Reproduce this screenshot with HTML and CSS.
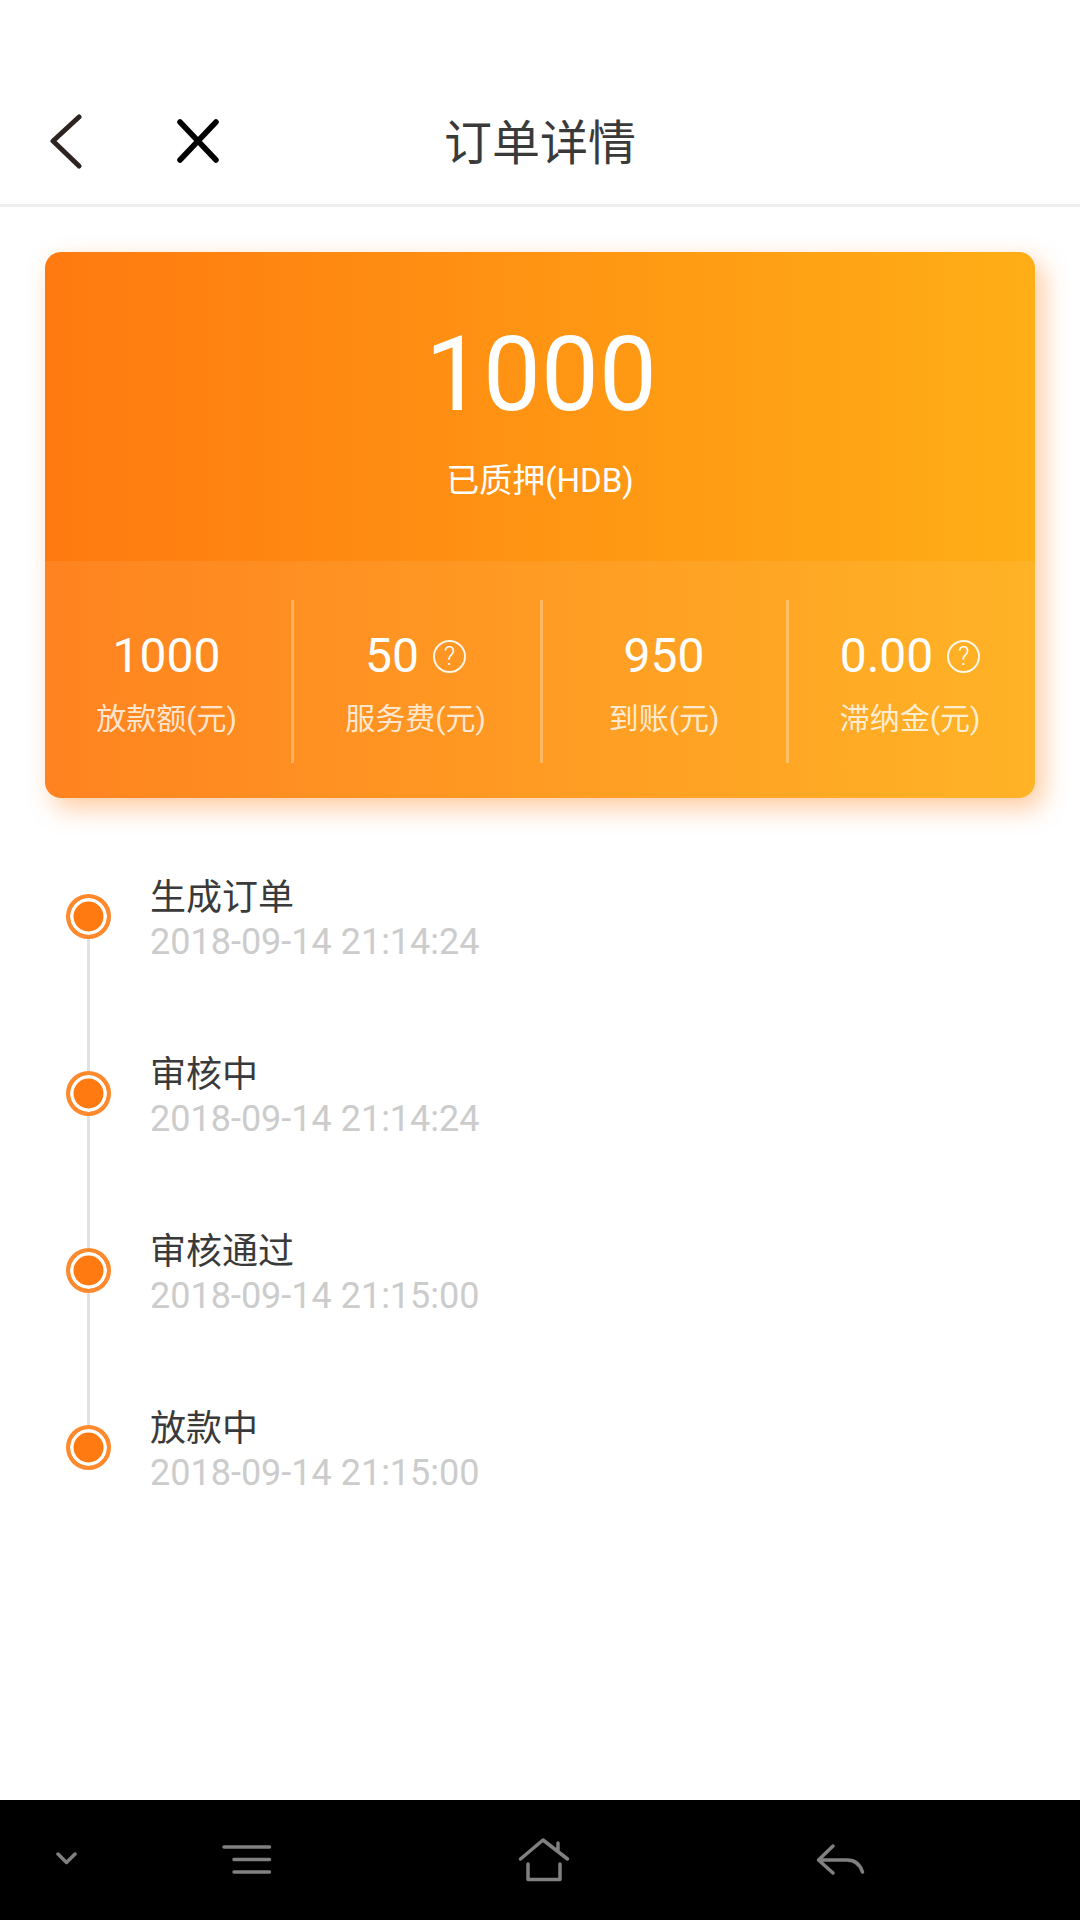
FILE: index.html
```html
<!DOCTYPE html>
<html lang="zh-CN">
<head>
    <meta charset="UTF-8">
    <meta name="viewport" content="width=device-width, initial-scale=1.0">
    <title>订单详情</title>
    <link rel="stylesheet" href="styles.css">
</head>
<body>
    <div class="app">
        <header class="header">
            <div class="header-icons">
                <svg class="icon-back" width="34" height="58" viewBox="0 0 34 58">
                    <path d="M31 5 L5 29 L31 54" fill="none" stroke="#2d2421" stroke-width="5" stroke-linecap="round" stroke-linejoin="round"/>
                </svg>
                <svg class="icon-close" width="44" height="44" viewBox="0 0 44 44">
                    <path d="M4 3 L40 41 M40 3 L4 41" fill="none" stroke="#000" stroke-width="5.5" stroke-linecap="round"/>
                </svg>
            </div>
            <h1 class="header-title">订单详情</h1>
        </header>

        <main class="content">
            <section class="card">
                <div class="hero">
                    <div class="hero-value">1000</div>
                    <div class="hero-label">已质押(HDB)</div>
                </div>
                <div class="stats">
                    <div class="stat">
                        <div class="stat-value">1000</div>
                        <div class="stat-label">放款额(元)</div>
                    </div>
                    <div class="stat">
                        <div class="stat-value">50<span class="help">?</span></div>
                        <div class="stat-label">服务费(元)</div>
                    </div>
                    <div class="stat">
                        <div class="stat-value">950</div>
                        <div class="stat-label">到账(元)</div>
                    </div>
                    <div class="stat">
                        <div class="stat-value">0.00<span class="help">?</span></div>
                        <div class="stat-label">滞纳金(元)</div>
                    </div>
                </div>
            </section>

            <ul class="timeline">
                <li class="step">
                    <div class="step-marker"><span class="dot"></span><span class="line"></span></div>
                    <div class="step-text">
                        <div class="step-title">生成订单</div>
                        <div class="step-time">2018-09-14 21:14:24</div>
                    </div>
                </li>
                <li class="step">
                    <div class="step-marker"><span class="dot"></span><span class="line"></span></div>
                    <div class="step-text">
                        <div class="step-title">审核中</div>
                        <div class="step-time">2018-09-14 21:14:24</div>
                    </div>
                </li>
                <li class="step">
                    <div class="step-marker"><span class="dot"></span><span class="line"></span></div>
                    <div class="step-text">
                        <div class="step-title">审核通过</div>
                        <div class="step-time">2018-09-14 21:15:00</div>
                    </div>
                </li>
                <li class="step">
                    <div class="step-marker"><span class="dot"></span></div>
                    <div class="step-text">
                        <div class="step-title">放款中</div>
                        <div class="step-time">2018-09-14 21:15:00</div>
                    </div>
                </li>
            </ul>
        </main>

        <nav class="navbar">
            <svg width="24" height="60" viewBox="0 0 24 60">
                <path d="M2 24 L10.5 32.5 L19 24" class="nav-stroke"/>
            </svg>
            <svg width="50" height="60" viewBox="0 0 50 60">
                <path d="M2 17 H47.5 M12 29.5 H47.5 M12 42 H47.5" class="nav-stroke"/>
            </svg>
            <svg width="52" height="60" viewBox="0 0 52 60">
                <path d="M2.5 29 L25 10 L49.5 29 M40 13 V21.5 M10 34 V49.5 H42 V34" class="nav-stroke"/>
            </svg>
            <svg width="50" height="60" viewBox="0 0 50 60">
                <path d="M17 16 L2.5 30 L17 43 M2.5 30 H31 C39 30 44 34 46.5 42" class="nav-stroke"/>
            </svg>
        </nav>
    </div>
</body>
</html>
```

FILE: styles.css
```css
:root {
    --orange: #ff7a10;
    --text-color: #3a3a3a;
    --muted-color: #cccccc;
    --nav-color: #808080;
}

* {
    margin: 0;
    padding: 0;
    box-sizing: border-box;
}

body {
    background: #ffffff;
    font-family: Roboto, "Noto Sans CJK SC", sans-serif;
}

.app {
    width: 1080px;
    height: 1920px;
    display: flex;
    flex-direction: column;
    overflow: hidden;
}

/* Header */
.header {
    height: 207px;
    padding-top: 78px;
    border-bottom: 3px solid #eeeeee;
    display: grid;
    grid-template-columns: 1fr auto 1fr;
    align-items: center;
}

.header-icons {
    display: flex;
    align-items: center;
    padding-left: 48px;
}

.icon-close {
    margin-left: 94px;
}

.header-title {
    grid-column: 2;
    margin-top: -5px;
    font-size: 48px;
    font-weight: 400;
    color: var(--text-color);
}

/* Card */
.content {
    flex: 1;
    padding: 45px 45px 0;
}

.card {
    border-radius: 16px;
    overflow: hidden;
    background: linear-gradient(90deg, #ff7a10 0%, #ffae16 100%);
    box-shadow: 8px 10px 26px rgba(255, 122, 16, 0.4);
}

.hero {
    height: 309px;
    padding-top: 63px;
    padding-left: 2px;
    text-align: center;
    color: #ffffff;
}

.hero-value {
    font-size: 103px;
    line-height: 120px;
}

.hero-label {
    margin-top: 24px;
    margin-left: -2px;
    font-size: 33px;
    line-height: 44px;
}

.stats {
    height: 237px;
    padding: 39px 0 35px;
    display: grid;
    grid-template-columns: 249px 249px 246px 1fr;
    background: rgba(255, 255, 255, 0.07);
}

.stat {
    padding-top: 26px;
    padding-right: 3px;
    text-align: center;
    border-right: 3px solid rgba(255, 255, 255, 0.3);
}

.stat:nth-child(3) {
    padding-right: 1px;
}

.stat:last-child {
    padding-right: 4px;
    border-right: none;
}

.stat-value {
    display: flex;
    justify-content: center;
    align-items: center;
    font-size: 48px;
    line-height: 60px;
    color: #ffffff;
}

.help {
    width: 33px;
    height: 33px;
    margin-left: 14px;
    border: 2px solid rgba(255, 255, 255, 0.9);
    border-radius: 50%;
    font-size: 25px;
    line-height: 29px;
    font-weight: 300;
    text-align: center;
}

.stat-label {
    margin-top: 11px;
    font-size: 30px;
    line-height: 44px;
    color: rgba(255, 255, 255, 0.8);
}

/* Timeline */
.timeline {
    list-style: none;
    margin-top: 96px;
}

.step {
    height: 177px;
    display: flex;
}

.step-marker {
    width: 45px;
    margin-left: 21px;
    display: flex;
    flex-direction: column;
    align-items: center;
}

.dot {
    width: 45px;
    height: 45px;
    flex: none;
    border: 4px solid #ff8a2e;
    border-radius: 50%;
    background: var(--orange);
    box-shadow: inset 0 0 0 3.5px #ffffff;
}

.line {
    width: 3px;
    flex: 1;
    background: #dfe2e5;
}

.step-text {
    margin-top: -18px;
    margin-left: 39px;
}

.step-title {
    font-size: 36px;
    line-height: 44px;
    color: var(--text-color);
}

.step-time {
    font-size: 36px;
    line-height: 44px;
    color: var(--muted-color);
}

/* Bottom navigation */
.navbar {
    height: 120px;
    padding-left: 56px;
    background: #000000;
    display: grid;
    grid-template-columns: 166px 296px 298px 1fr;
    align-items: center;
}

.nav-stroke {
    fill: none;
    stroke: var(--nav-color);
    stroke-width: 3.5;
    stroke-linecap: round;
    stroke-linejoin: round;
}
```
